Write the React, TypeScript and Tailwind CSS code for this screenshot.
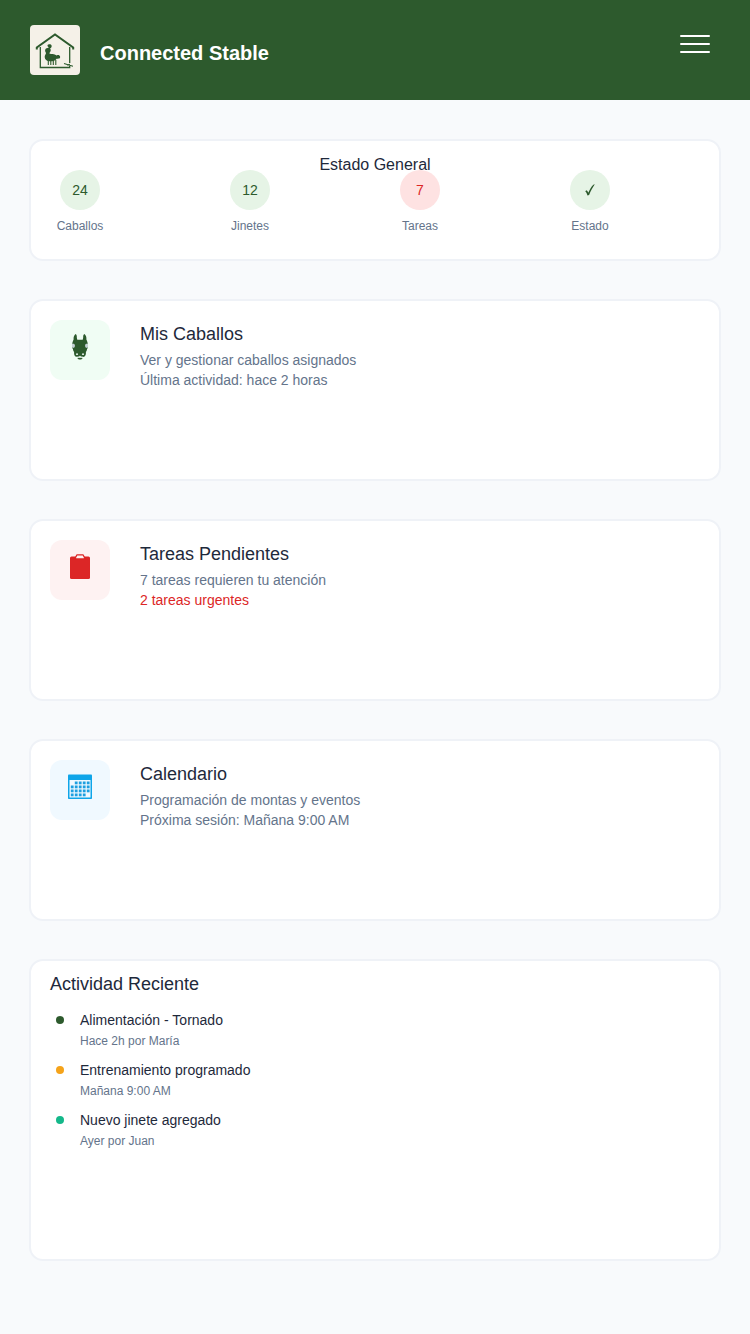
import type { ReactNode } from 'react';

const cardBase = 'rounded-[14px] border-2 border-[#eff2f7] bg-white';

function StableLogo() {
  return (
    <svg viewBox="0 0 50 50" className="size-[50px] rounded bg-[#f5f1e8]" role="img" aria-label="Connected Stable">
      <g fill="none" stroke="#2d5a2d">
        <path d="M6.800 24.500V22.500L25 9.500 43.200 22.500v2" strokeWidth="2" />
        <path d="M10.300 22v20.500h29.400V41M39.700 22v16" strokeWidth="1.300" />
        <path d="M18.300 35v5M20.800 35v5M23.300 35v5M25.800 35v5" strokeWidth="1.100" />
        <path d="M34 38.500l4 1.200 5 1.500M37 40l3-.8" strokeWidth="1.100" />
      </g>
      <path
        d="M17.500 20.200c.8-1.500 3.600-1.400 4.100.2.300 1.400-.3 2.600-1.500 2.900.5.700.8 1.500.6 2.400-.3 1.300-1.200 1.700-1.300 2.900 1.700.9 4.800.1 7.300 1.800.9-.4 1.900-.5 2.700 0 1.200.8 1 2.800-.4 3.200-1 .3-1.800 0-2.400.1-1.200 2.400-4.400 2.600-6.900 2.500-3-.1-5-1.700-5-4.300 0-1.700 1-2.300 1.300-3.600.1-1-1.100-1.700-.9-3.100.2-1.400 1.300-2 2.400-2.100.8-.1 1.200-.4 1.200-.9-.4-.5-1.500-.9-1.200-2Z"
        fill="#2d5a2d"
      />
    </svg>
  );
}

function HorseIcon() {
  return (
    <svg viewBox="0 0 16 26" className="mb-[7px] h-[26px] w-4" aria-hidden="true">
      <path
        d="M3.600 0C2.200 1 1.300 3.300 1.600 5.500.7 7.500 0 9.500.2 11.500v2.200c.2.600.4 1 .8 1.400-.1 1.200.4 2.100 1.100 2.800-.2 1.700.2 3.600 1.100 4.400 1 .8 2 .7 3 .9h3.600c1-.2 2-.1 3-.9.900-.8 1.300-2.700 1.100-4.400.7-.7 1.200-1.600 1.100-2.800.4-.4.600-.8.800-1.400v-2.200c.2-2-.5-4-1.400-6C14.700 3.300 13.800 1 12.400 0c-.9.800-1.300 1.600-1.200 2.600.1.900-.1 2.200-.5 3.200H5.300C4.900 4.800 4.700 3.500 4.800 2.600 4.900 1.600 4.500.8 3.600 0Z"
        fill="#2d5a2d"
      />
      <path d="M0 9.700h1.700c1 .5 1.300 1.300 1.200 2.200 0 1.200-.8 2-2 2C-.3 13.300-.4 11.200 0 9.700ZM16 9.700h-1.700c-1 .5-1.300 1.300-1.200 2.200 0 1.200.8 2 2 2 1.200-.6 1.300-2.700.9-4.200Z" fill="#c3d0d3" />
      <g fill="#dbe9e0">
        <ellipse cx="5" cy="20.200" rx="1.100" ry=".9" />
        <ellipse cx="11" cy="20.200" rx="1.100" ry=".9" />
        <path d="M4.500 22.800 6.500 22.600 8 21.800l1.500.8 2 .2-1.500.7H6Z" />
      </g>
      <path d="M5.200 23.900h5.600L9.200 25.400H6.800Z" fill="#2d5a2d" />
    </svg>
  );
}

function ClipboardIcon() {
  return (
    <svg viewBox="0 0 20 26" className="mb-[7px] h-[26px] w-5" aria-hidden="true">
      <rect y="2.500" width="20" height="22.500" rx="1.500" fill="#dc2626" />
      <path d="M5.500 5V3.500L7 .8h6l1.500 2.700V5Z" fill="#fef2f2" stroke="#dc2626" strokeWidth="1.300" strokeLinejoin="round" />
    </svg>
  );
}

function CalendarIcon() {
  const dots = [0, 1, 2, 3].flatMap((row) =>
    [0, 1, 2, 3, 4]
      .filter((col) => !(row === 0 && col === 0) && !(row === 3 && col === 4))
      .map((col) => ({ row, col })),
  );
  return (
    <svg viewBox="0 0 24 26" className="mb-[7px] h-[26px] w-6" aria-hidden="true">
      <rect y=".5" width="24" height="24.500" rx=".8" fill="#0ea5e9" />
      <path d="M1.500 6h21v17.500h-21z" fill="#f0f9ff" />
      {dots.map(({ row, col }) => (
        <rect key={`${row}-${col}`} x={2.800 + col * 4} y={7.500 + row * 4} width="2.800" height="2.800" fill="#1d9fe0" />
      ))}
    </svg>
  );
}

function CheckIcon() {
  return (
    <svg viewBox="0 0 12 14" className="h-3.5 w-3" role="img" aria-label="Correcto">
      <path d="M1.200 8.200 2.500 7.300c.8.400 1.400 1.400 1.800 2.500C5.700 6.500 7.400 3.500 9.300 1.700l1.500-.5C8.700 4.300 6.700 7.700 5.100 12l-1.600.6C2.900 10.500 2.300 8.900 1.200 8.200Z" fill="#2d5a2d" />
    </svg>
  );
}

const stats: { value: ReactNode; label: string; tone: string }[] = [
  { value: '24', label: 'Caballos', tone: 'bg-[#e6f4e6] text-[#2d5a2d]' },
  { value: '12', label: 'Jinetes', tone: 'bg-[#e6f4e6] text-[#2d5a2d]' },
  { value: '7', label: 'Tareas', tone: 'bg-[#fee2e2] text-[#dc2626]' },
  { value: <CheckIcon />, label: 'Estado', tone: 'bg-[#e6f4e6] text-[#2d5a2d]' },
];

const activities = [
  { title: 'Alimentación - Tornado', detail: 'Hace 2h por María', dot: 'bg-[#2d5a2d]' },
  { title: 'Entrenamiento programado', detail: 'Mañana 9:00 AM', dot: 'bg-[#f5a31a]' },
  { title: 'Nuevo jinete agregado', detail: 'Ayer por Juan', dot: 'bg-[#14b88a]' },
];

type FeatureProps = {
  icon: ReactNode;
  tile: string;
  title: string;
  text: string;
  note: string;
  noteColor?: string;
};

function FeatureCard({ icon, tile, title, text, note, noteColor = 'text-[#64748b]' }: FeatureProps) {
  return (
    <section className={`${cardBase} flex gap-[30px] px-[19px] pt-[19px] pb-[89px]`}>
      <div className={`flex size-[60px] shrink-0 items-center justify-center rounded-xl ${tile}`}>{icon}</div>
      <div className="pt-1">
        <h2 className="text-lg leading-5">{title}</h2>
        <p className="mt-1.5 text-sm leading-5 text-[#64748b]">{text}</p>
        <p className={`text-sm leading-5 ${noteColor}`}>{note}</p>
      </div>
    </section>
  );
}

export default function App() {
  return (
    <div className="min-h-screen bg-[#f8fafc] font-['Liberation_Sans',Arial,sans-serif] text-[#1e293b]">
      <header className="flex items-start bg-[#2d5a2d] pt-[25px] pr-10 pb-[25px] pl-[30px] text-white">
        <StableLogo />
        <h1 className="mt-4 ml-5 text-xl leading-6 font-bold">Connected Stable</h1>
        <button type="button" aria-label="Menú" className="mt-2.5 ml-auto flex w-[30px] flex-col gap-1.5">
          <span className="h-0.5 w-full rounded-full bg-white" />
          <span className="h-0.5 w-full rounded-full bg-white" />
          <span className="h-0.5 w-full rounded-full bg-white" />
        </button>
      </header>

      <main className="flex flex-col gap-[38px] px-[29px] pt-[39px] pb-[73px]">
        <section className={`${cardBase} pt-[19px] pb-[25px]`}>
          <h2 className="text-center text-base leading-[10px]">Estado General</h2>
          <ul className="flex justify-between pr-[99px] pl-[19px]">
            {stats.map((stat) => (
              <li key={stat.label} className="flex w-[60px] flex-col items-center">
                <span className={`flex size-10 items-center justify-center rounded-full text-sm ${stat.tone}`}>
                  {stat.value}
                </span>
                <span className="mt-2 text-xs leading-4 text-[#64748b]">{stat.label}</span>
              </li>
            ))}
          </ul>
        </section>

        <FeatureCard
          icon={<HorseIcon />}
          tile="bg-[#f0fdf4]"
          title="Mis Caballos"
          text="Ver y gestionar caballos asignados"
          note="Última actividad: hace 2 horas"
        />
        <FeatureCard
          icon={<ClipboardIcon />}
          tile="bg-[#fef2f2]"
          title="Tareas Pendientes"
          text="7 tareas requieren tu atención"
          note="2 tareas urgentes"
          noteColor="text-[#dc2626]"
        />
        <FeatureCard
          icon={<CalendarIcon />}
          tile="bg-[#f0f9ff]"
          title="Calendario"
          text="Programación de montas y eventos"
          note="Próxima sesión: Mañana 9:00 AM"
        />

        <section className={`${cardBase} px-[19px] pt-[13px] pb-[108px]`}>
          <h2 className="text-lg leading-5">Actividad Reciente</h2>
          <ul className="mt-4 flex flex-col gap-[9px]">
            {activities.map((activity) => (
              <li key={activity.title} className="flex gap-4 pl-1.5">
                <span className={`mt-1.5 size-2 shrink-0 rounded-full ${activity.dot}`} />
                <div>
                  <p className="text-sm leading-5">{activity.title}</p>
                  <p className="mt-px text-xs leading-5 text-[#64748b]">{activity.detail}</p>
                </div>
              </li>
            ))}
          </ul>
        </section>
      </main>
    </div>
  );
}
